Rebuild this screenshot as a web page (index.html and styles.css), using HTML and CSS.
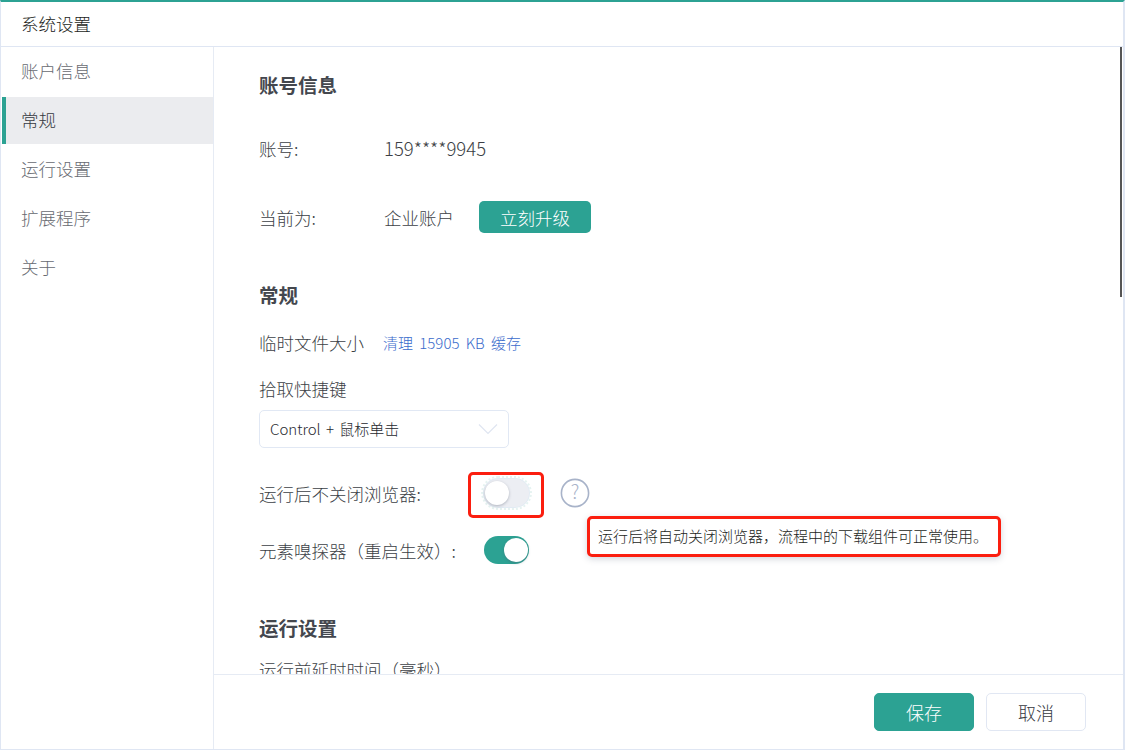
FILE: index.html
```html
<!DOCTYPE html>
<html lang="zh-CN">
<head>
<meta charset="utf-8">
<title>系统设置</title>
<link rel="stylesheet" href="styles.css">
</head>
<body>
<div class="window">
  <header class="title">系统设置</header>
  <div class="body">
    <nav class="side">
      <div class="nav-item">账户信息</div>
      <div class="nav-item active">常规</div>
      <div class="nav-item">运行设置</div>
      <div class="nav-item">扩展程序</div>
      <div class="nav-item">关于</div>
    </nav>
    <div class="panel">
      <main class="content">
        <h2 class="h-account">账号信息</h2>
        <div class="row row-account"><span class="label">账号:</span><span class="value">159****9945</span></div>
        <div class="row row-current"><span class="label">当前为:</span><span class="value">企业账户</span><button class="upgrade">立刻升级</button></div>
        <h2 class="h-general">常规</h2>
        <div class="row row-temp"><span class="temp-label">临时文件大小</span><span class="link">清理 15905 KB 缓存</span></div>
        <div class="pick-label">拾取快捷键</div>
        <div class="select"><span class="select-text">Control + 鼠标单击</span>
          <svg class="chev" width="20" height="12" viewBox="0 0 20 12"><path d="M1 1.5 10 10.5 19 1.5" fill="none" stroke="#dfe5f1" stroke-width="1.2"/></svg>
        </div>
        <div class="row row-browser">
          <span class="sw-label">运行后不关闭浏览器:</span>
          <span class="switch off"><i class="knob"></i></span>
          <svg class="help" width="30" height="30" viewBox="0 0 30 30"><circle cx="15" cy="15" r="13.6" fill="none" stroke="#a8b3c9" stroke-width="1.6"/><text x="15" y="21" text-anchor="middle" class="help-q">?</text></svg>
        </div>
        <div class="row row-sniffer">
          <span class="sw-label">元素嗅探器（重启生效）:</span>
          <span class="switch on"><i class="knob"></i></span>
        </div>
        <h2 class="h-run">运行设置</h2>
        <div class="delay">运行前延时时间（毫秒）</div>
      </main>
      <footer class="foot">
        <button class="btn primary">保存</button>
        <button class="btn">取消</button>
      </footer>
    </div>
  </div>
  <div class="scroll-thumb"></div>
  <div class="mark mark-switch"></div>
  <div class="tip">运行后将自动关闭浏览器，流程中的下载组件可正常使用。</div>
</div>
</body>
</html>
```

FILE: styles.css
```css
* { box-sizing: border-box; }
html, body { margin: 0; height: 100%; overflow: hidden; background: #fff; }
body { font-family: "Noto Sans CJK SC", "Noto Sans", sans-serif; font-weight: 300; color: #3c3f46; }
.window {
  position: relative; width: 1125px; height: 750px; display: flex; flex-direction: column;
  border-top: 2px solid #2ca293; border-left: 1px solid #dfe6f3; border-right: 2px solid #dfe6f3; border-bottom: 1px solid #dfe6f3;
}
.title { height: 45px; flex: none; padding-left: 20px; font-size: 17.5px; line-height: 43px; color: #1c1e22; border-bottom: 1px solid #dfe6f3; }
.body { flex: 1; display: flex; min-height: 0; }
.side { width: 213px; flex: none; border-right: 1px solid #e6ebf4; padding-top: 1px; }
.nav-item { height: 47px; margin-bottom: 2px; padding-left: 20px; font-size: 17.5px; line-height: 46px; color: #676a71; }
.nav-item.active { margin-left: 1px; padding-left: 15px; border-left: 4px solid #2ca293; background: #ebecef; color: #36393f; }
.panel { flex: 1; display: flex; flex-direction: column; min-width: 0; }
.content { height: 627px; flex: none; overflow: hidden; padding-left: 45px; }
h2 { margin: 0; font-size: 19.5px; font-weight: 700; color: #44474e; line-height: 28px; }
.h-account { margin-top: 24px; }
.row { display: flex; align-items: center; font-size: 17.5px; }
.label { width: 125px; }
.row-account { margin-top: 34px; height: 30px; }
.row-account .value { font-size: 18.5px; }
.row-current { margin-top: 38px; height: 32px; }
.upgrade { margin-left: 25px; width: 112px; height: 32px; border: 0; border-radius: 5px; background: #2ca293; color: #fff; font: 300 17.5px "Noto Sans CJK SC", sans-serif; padding: 0; }
.h-general { margin-top: 48px; }
.row-temp { margin-top: 18px; height: 30px; }
.temp-label { width: 124px; }
.link { font-size: 15px; color: #3a6bcc; word-spacing: 3px; }
.pick-label { margin-top: 17px; font-size: 17.5px; line-height: 30px; }
.select { margin-top: 6px; width: 250px; height: 38px; border: 1px solid #e1e8f4; border-radius: 5px; display: flex; align-items: center; justify-content: space-between; padding: 0 10px; font-size: 15px; word-spacing: 2px; color: #26282e; }
.select-text { margin-bottom: 2px; }
.row-browser { margin-top: 23px; height: 44px; }
.sw-label { width: 225px; }
.row-sniffer { margin-top: 20px; height: 30px; }
.switch { position: relative; display: block; width: 45px; height: 28px; border-radius: 14px; flex: none; }
.switch.off { background: #eceef3; box-shadow: 0 0 0 1px #e2ebf4; outline: 2px dotted #e6f3f1; outline-offset: 1px; }
.switch.on { background: #2ca293; }
.knob { position: absolute; top: 2px; width: 24px; height: 24px; border-radius: 50%; background: #fff; box-shadow: 0 1px 3px rgba(80,90,110,.4); }
.off .knob { left: 1px; }
.on .knob { right: 1px; }
.help { margin-left: 31px; flex: none; }
.help-q { font-size: 19px; fill: #a8b3c9; }
.h-run { margin-top: 49px; }
.delay { margin-top: 13px; font-size: 17.5px; line-height: 30px; }
.foot { flex: 1; border-top: 1px solid #e6ebf4; display: flex; justify-content: flex-end; align-items: center; gap: 12px; padding-right: 37px; padding-bottom: 1px; }
.btn { width: 100px; height: 38px; border: 1px solid #e1e7f3; border-radius: 5px; background: #fff; color: #36393f; font: 300 18px "Noto Sans CJK SC", sans-serif; padding: 0; }
.btn.primary { background: #2ca293; border-color: #2ca293; color: #fff; }
.scroll-thumb { position: absolute; left: 1119px; top: 45px; width: 2px; height: 250px; background: #555; }
.mark { position: absolute; border: 3px solid #fb1e0f; border-radius: 5px; }
.mark-switch { left: 467px; top: 470px; width: 76px; height: 46px; }
.tip { position: absolute; left: 586px; top: 514px; width: 414px; height: 41px; border: 3px solid #fb1e0f; border-radius: 5px; background: #fff; padding-left: 8px; font-size: 15px; line-height: 33px; color: #1c1e22; white-space: nowrap; box-shadow: 0 2px 6px rgba(80,90,120,.25); }
```
